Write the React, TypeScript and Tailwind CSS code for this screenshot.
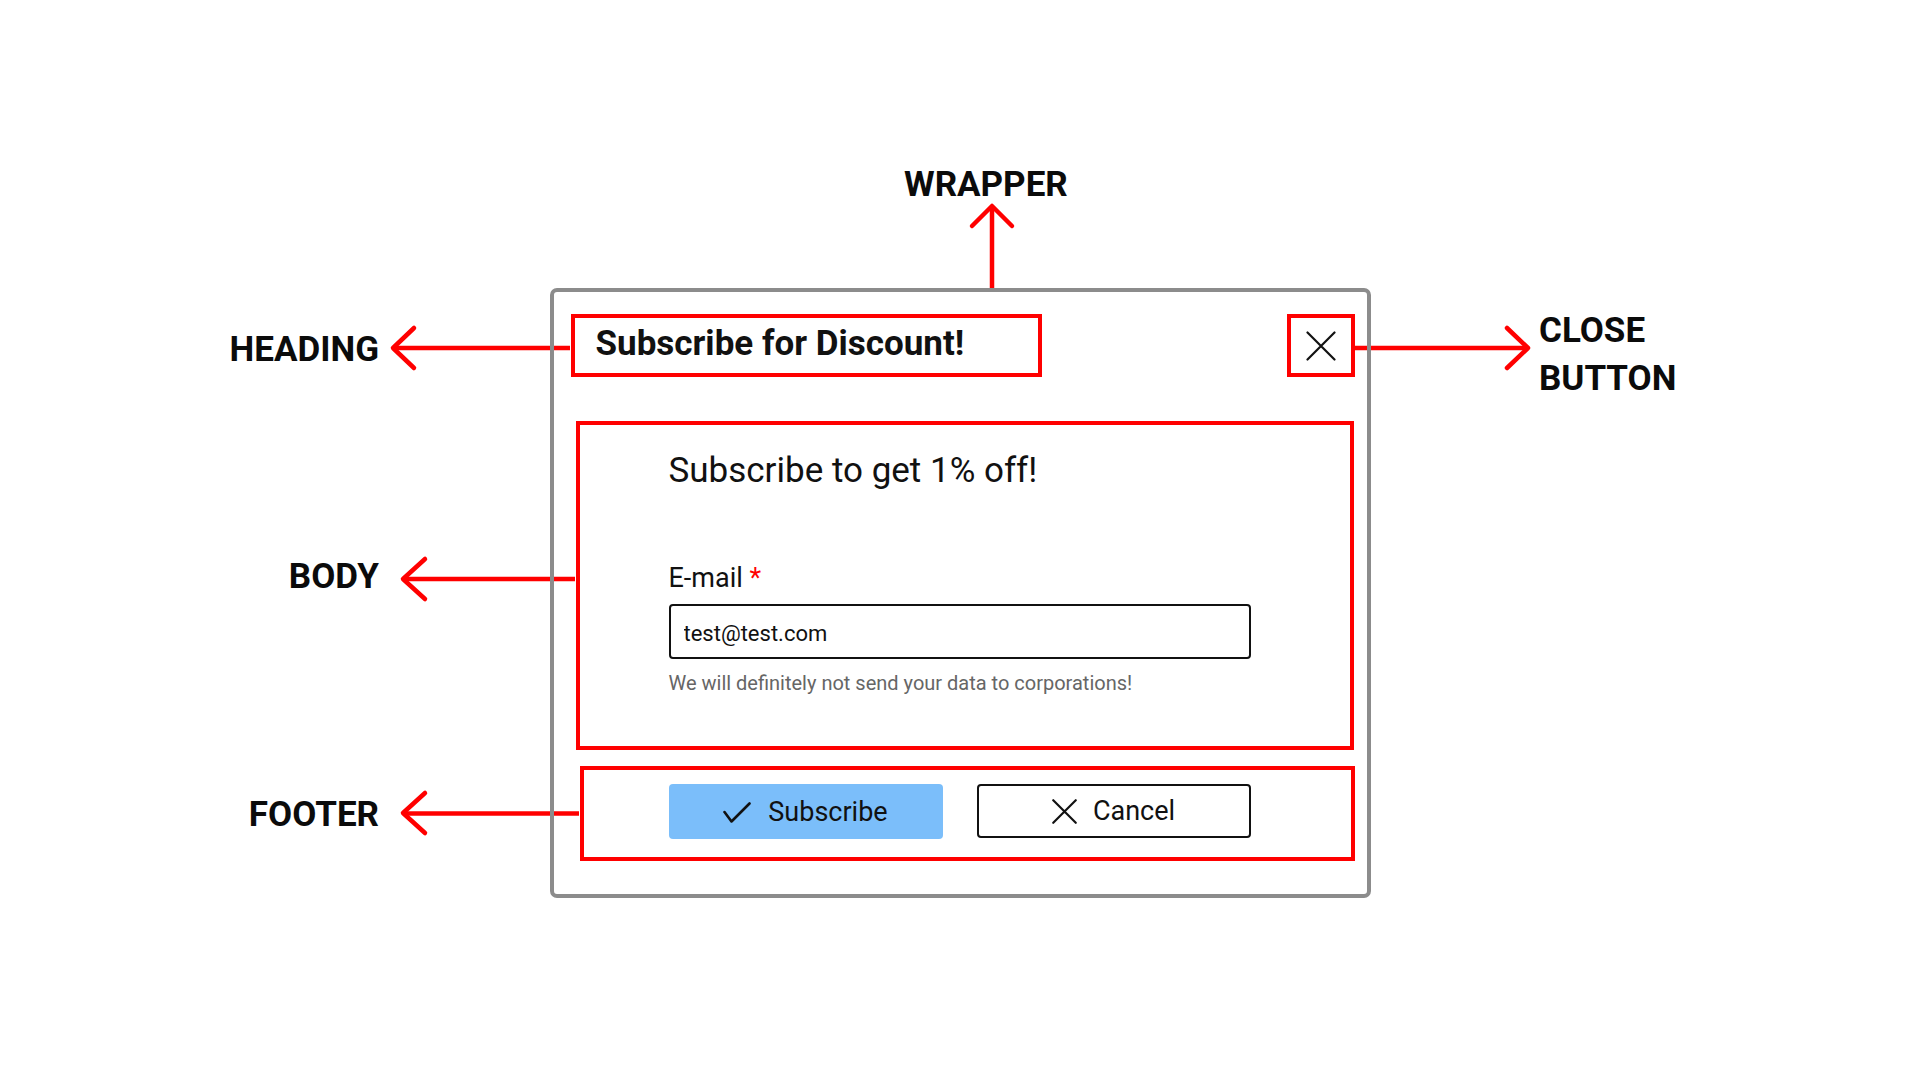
import { useState } from 'react';

// annotation arrows, drawn on the canvas under the dialog
const arrows = [
  { line: 'M992 288 V207', head: 'M972 226 L992 206 L1012 226' },
  { line: 'M570 348 H393', head: 'M414 328 L393 348 L414 368' },
  { line: 'M1354 348 H1527', head: 'M1507 328 L1528 348 L1507 368' },
  { line: 'M575 579 H403', head: 'M425 559 L403 579 L425 599' },
  { line: 'M579 813.5 H403', head: 'M425 793 L403 813 L425 833' },
];

function Annotations() {
  return (
    <svg className="absolute inset-0" width="1920" height="1080" viewBox="0 0 1920 1080">
      {arrows.map((a, i) => (
        <g key={i} stroke="#ff0000" strokeWidth="4.5" fill="none" strokeLinecap="round" strokeLinejoin="round">
          <path d={a.line} strokeLinecap="butt" />
          <path d={a.head} />
        </g>
      ))}
    </svg>
  );
}

function Label({ className, children }: { className: string; children: React.ReactNode }) {
  return (
    <div className={`absolute font-bold text-[35px] text-[#0b0b0b] ${className}`}>
      {children}
    </div>
  );
}

function CheckIcon() {
  return (
    <svg width="28" height="21" viewBox="0 0 28 21" fill="none" stroke="#111" strokeWidth="2.6" strokeLinecap="round" strokeLinejoin="round">
      <path d="M1.5 10 L8.5 19.5 L26.5 1.5" />
    </svg>
  );
}

function XIcon({ size, stroke = 2.4 }: { size: number; stroke?: number }) {
  return (
    <svg width={size} height={size} viewBox="0 0 30 30" fill="none" stroke="#111" strokeWidth={stroke} strokeLinecap="round">
      <path d="M1.5 1.5 L28.5 28.5 M28.5 1.5 L1.5 28.5" />
    </svg>
  );
}

export default function App() {
  const [email, setEmail] = useState('test@test.com');

  return (
    <div className="relative w-full h-[1080px] bg-white overflow-hidden font-['Roboto',sans-serif] text-[#111]">
      <Annotations />

      <Label className="left-[904px] top-[165px] leading-[40px]">WRAPPER</Label>
      <Label className="left-0 w-[379px] text-right top-[330px] leading-[40px]">HEADING</Label>
      <Label className="left-0 w-[379px] text-right top-[557px] leading-[40px]">BODY</Label>
      <Label className="left-0 w-[379px] text-right top-[795px] leading-[40px]">FOOTER</Label>
      <Label className="left-[1539px] top-[307px] leading-[48px]">
        CLOSE
        <br />
        BUTTON
      </Label>

      <div className="relative pt-[288px]">
        <div className="mx-auto w-[821px] h-[610px] border-4 border-[#8c8c8c] rounded-[7px] flex flex-col">
          {/* heading + close */}
          <div className="flex justify-between items-start mt-[22px] ml-[17px] mr-[12px] h-[63px]">
            <div className="w-[471px] h-[63px] border-4 border-[#ff0000] flex items-center pl-[21px] pb-[3px]">
              <h2 className="text-[35px] font-bold leading-[40px]">Subscribe for Discount!</h2>
            </div>
            <button className="w-[68px] h-[63px] border-4 border-[#ff0000] flex items-center justify-center">
              <XIcon size={30} stroke={2.2} />
            </button>
          </div>

          {/* body */}
          <div className="mt-[44px] ml-[22px] mr-[13px] h-[329px] border-4 border-[#ff0000] pl-[89px] pt-[25px]">
            <p className="text-[35px] leading-[42px]">Subscribe to get 1% off!</p>
            <label className="block mt-[70px] text-[27px] leading-[32px]">
              E-mail <span className="text-[#ff0000]">*</span>
            </label>
            <input
              type="email"
              value={email}
              onChange={(e) => setEmail(e.target.value)}
              className="mt-[10px] w-[582px] h-[55px] border-2 border-[#111] rounded-[4px] pl-[13px] pt-[3px] text-[22px] text-[#111] outline-none"
            />
            <p className="mt-[12px] text-[20px] leading-[24px] text-[#666]">
              We will definitely not send your data to corporations!
            </p>
          </div>

          {/* footer */}
          <div className="mt-[16px] ml-[26px] mr-[12px] h-[95px] border-4 border-[#ff0000] pl-[85px] pt-[14px] flex gap-[34px] items-start">
            <button className="w-[274px] h-[55px] rounded-[4px] bg-[#7bbefa] flex items-center justify-center gap-[17px] pt-[1px] text-[27px]">
              <CheckIcon />
              <span>Subscribe</span>
            </button>
            <button className="w-[274px] h-[54px] rounded-[4px] border-2 border-[#111] flex items-center justify-center gap-[16px] pt-[1px] text-[27px]">
              <XIcon size={25} stroke={2.6} />
              <span>Cancel</span>
            </button>
          </div>
        </div>
      </div>
    </div>
  );
}
